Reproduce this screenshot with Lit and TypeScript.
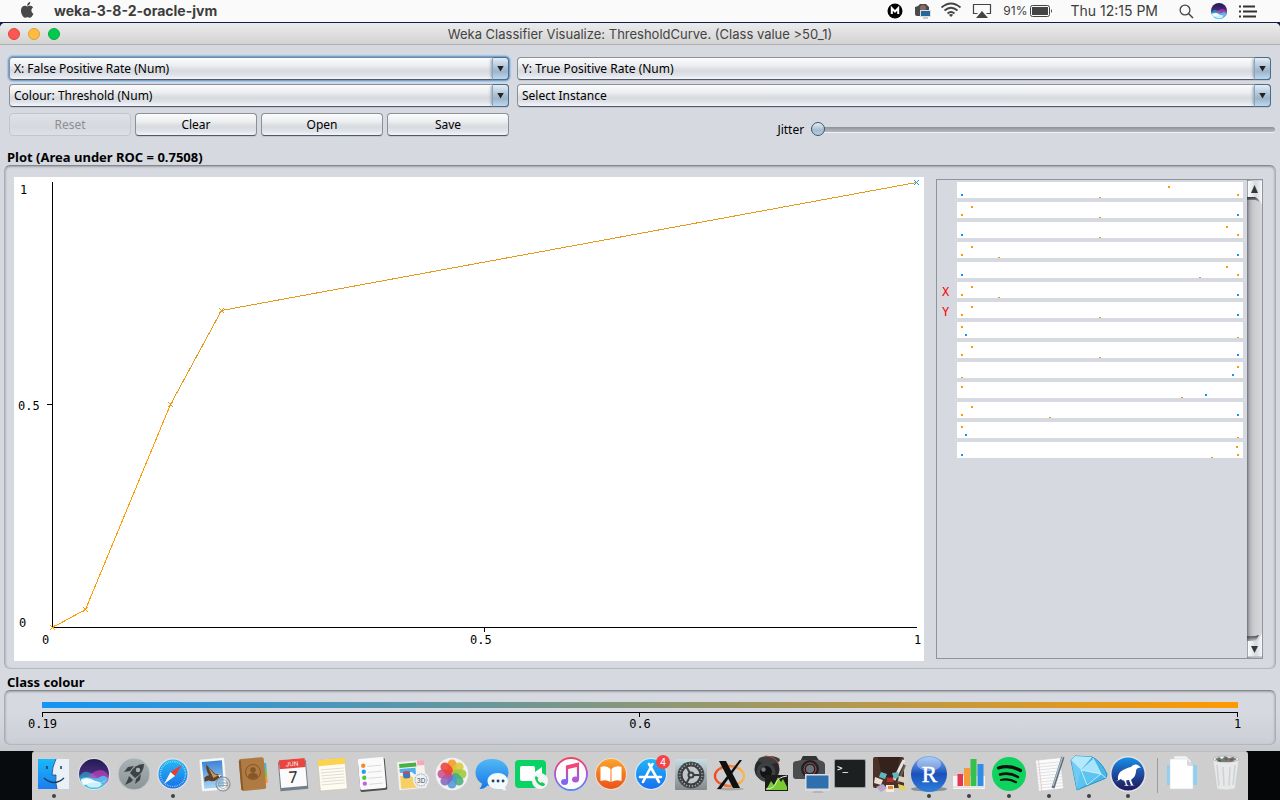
import { LitElement, html, svg, css, TemplateResult, SVGTemplateResult } from "lit";
import { customElement, property, state } from "lit/decorators.js";

type Dot = [x: number, y: number, kind: "o" | "b" | "d"];

const BLUE = "#1f97ea";
const ORANGE = "#ff9a00";
const AMBER = "#e69a1c";

/** One strip per attribute: marks given on a 286 x 16 raster. */
const STRIPS: { axis?: string; dots: Dot[] }[] = [
  { dots: [[4, 12, "b"], [211, 4, "o"], [280, 12, "o"], [142, 15, "d"]] },
  { dots: [[4, 12, "o"], [14, 4, "o"], [280, 12, "b"], [142, 15, "d"]] },
  { dots: [[4, 12, "b"], [269, 4, "o"], [280, 12, "o"], [142, 15, "d"]] },
  { dots: [[4, 12, "o"], [14, 4, "o"], [280, 12, "b"], [41, 15, "d"]] },
  { dots: [[4, 12, "b"], [269, 4, "o"], [280, 12, "o"], [242, 15, "d"]] },
  { axis: "X", dots: [[4, 12, "o"], [14, 4, "o"], [280, 12, "b"], [41, 15, "d"]] },
  { axis: "Y", dots: [[4, 12, "o"], [14, 4, "o"], [280, 12, "b"], [142, 15, "d"]] },
  { dots: [[4, 4, "o"], [8, 12, "b"], [280, 15, "d"]] },
  { dots: [[4, 12, "o"], [14, 4, "o"], [280, 12, "b"], [142, 15, "d"]] },
  { dots: [[280, 4, "o"], [275, 12, "b"], [4, 15, "d"]] },
  { dots: [[4, 4, "o"], [248, 12, "b"], [224, 15, "d"]] },
  { dots: [[4, 12, "o"], [14, 4, "o"], [280, 12, "b"], [92, 15, "d"]] },
  { dots: [[4, 4, "o"], [8, 12, "b"], [280, 15, "d"]] },
  { dots: [[4, 12, "b"], [279, 4, "o"], [280, 12, "o"], [254, 15, "d"]] },
];

/** ROC points as (false positive rate, true positive rate, colour). */
const ROC: [number, number, string][] = [
  [0, 0, ORANGE],
  [0.0385, 0.0404, ORANGE],
  [0.137, 0.501, AMBER],
  [0.196, 0.711, AMBER],
  [1, 1, BLUE],
];

@customElement("roc-plot")
export class RocPlot extends LitElement {
  static styles = css`
    :host { display: block; background: #fff; min-width: 0; min-height: 0; overflow: hidden; }
    .plot { display: block; width: 100%; height: 100%; font: 12px "DejaVu Sans Mono", monospace; }
    .axis { stroke: #000; shape-rendering: crispEdges; }
    .seg { shape-rendering: crispEdges; }
  `;
  @state() private w = 910;
  @state() private h = 484;
  private observer?: ResizeObserver;

  connectedCallback() {
    super.connectedCallback();
    this.observer = new ResizeObserver(([entry]) => {
      this.w = Math.round(entry.contentRect.width);
      this.h = Math.round(entry.contentRect.height);
    });
    this.observer.observe(this);
  }

  disconnectedCallback() {
    this.observer?.disconnect();
    super.disconnectedCallback();
  }

  render() {
    const left = 38, top = 5, right = this.w - 8, bottom = this.h - 34;
    const px = (v: number) => Math.round(left + v * (right - left)) + 0.5;
    const py = (v: number) => Math.floor(bottom - v * (bottom - top)) + 0.5;
    const midX = px(0.5), midY = py(0.5);
    return html`<svg class="plot" role="img" aria-label="ROC curve">
      <path class="axis" fill="none" d="M${left + 0.5} ${top}V${bottom + 0.5}H${right + 1}M${left - 5} ${midY}H${left}M${midX} ${bottom}V${bottom + 5}" />
      <text x="6" y="${top + 12}">1</text>
      <text x="4" y="${midY + 5.5}">0.5</text>
      <text x="5" y="${bottom}">0</text>
      <text x="28" y="${bottom + 17}">0</text>
      <text x="${midX - 14.5}" y="${bottom + 17}">0.5</text>
      <text x="${right - 2}" y="${bottom + 17}">1</text>
      ${ROC.slice(1).map(([x, y], i) => svg`<line class="seg" stroke=${i < 2 ? ORANGE : AMBER}
        x1=${px(ROC[i][0])} y1=${py(ROC[i][1])} x2=${px(x)} y2=${py(y)} />`)}
      ${ROC.map(([x, y, c]) => svg`<path class="seg" fill="none" stroke=${c}
        d="M${px(x) - 2.5} ${py(y) - 2.5}l5 5M${px(x) + 2.5} ${py(y) - 2.5}l-5 5" />`)}
    </svg>`;
  }
}

@customElement("attribute-strips")
export class AttributeStrips extends LitElement {
  static styles = css`
    :host { display: grid; grid-template-columns: 1fr 15px; border: 1px solid #8f939e; min-width: 0; min-height: 0; box-sizing: border-box; }
    .rows { display: flex; flex-direction: column; gap: 4px; margin: 0; padding: 2px 4px 0 0; list-style: none; min-height: 0; overflow: hidden; }
    .row { display: grid; grid-template-columns: 20px 1fr; height: 16px; flex: none; }
    .axis { color: #f00; font: 12px/20px "DejaVu Sans Mono", monospace; padding-left: 5px; }
    .strip { display: block; width: 100%; height: 16px; background: #fff; shape-rendering: crispEdges; }
    .bar { display: flex; flex-direction: column; min-height: 0; background: linear-gradient(90deg, #6d7078 0, #a5a7ad 2px, #c3c4c9 5px, #cdced2 8px, #d6d7db 100%); }
    .end { display: block; border: 0; padding: 0; background: none; height: 26px; width: 15px; flex: none; }
    .track { flex: 1; }
    .end svg { display: block; }
  `;
  render() {
    const fill = { o: ORANGE, b: "#1795ee", d: "#dd9a25" };
    return html`
      <ul class="rows">
        ${STRIPS.map((s) => html`<li class="row">
          <span class="axis">${s.axis ?? ""}</span>
          <svg class="strip" viewBox="0 0 286 16" preserveAspectRatio="none" aria-hidden="true">
            ${s.dots.map(([x, y, k]) => svg`<rect x=${x} y=${y} width="2" height=${k === "d" ? 1 : 2} fill=${fill[k]} />`)}
          </svg></li>`)}
      </ul>
      <div class="bar">
        <button class="end" aria-label="Scroll up">
          <svg width="15" height="26">
            <defs><linearGradient id="g"><stop offset="0" stop-color="#fff" /><stop offset=".6" stop-color="#d6d9de" /><stop offset="1" stop-color="#f6f8fa" /></linearGradient>
            <linearGradient id="s" x2="0" y2="1"><stop offset="0" stop-color="#33363b" /><stop offset="1" stop-color="#33363b" stop-opacity="0" /></linearGradient></defs>
            <path d="M0 17h8q4 2 5 6-3-3-5-3H0z" fill="url(#s)" />
            <path d="M0 1h15v24q-3-7-6-8H0z" fill="url(#g)" /><path d="M.5 1v16" stroke="#a2a5ac" />
            <path d="M7.500 5l3.500 8h-7z" fill="#34373b" />
          </svg>
        </button>
        <div class="track"></div>
        <button class="end" aria-label="Scroll down">
          <svg width="15" height="26">
            <defs><linearGradient id="g"><stop offset="0" stop-color="#fff" /><stop offset=".6" stop-color="#d6d9de" /><stop offset="1" stop-color="#f6f8fa" /></linearGradient>
            <linearGradient id="s" x2="0" y2="1"><stop offset="0" stop-color="#33363b" stop-opacity="0" /><stop offset="1" stop-color="#33363b" /></linearGradient></defs>
            <path d="M0 4q7 1 12-1-2 4-4 6H0z" fill="url(#s)" />
            <path d="M0 25h15V1q-3 7-6 8H0z" fill="url(#g)" /><path d="M.5 9v16H15" fill="none" stroke="#a2a5ac" />
            <path d="M7.500 21l3.500-7h-7z" fill="#34373b" />
          </svg>
        </button>
      </div>`;
  }
}

const siri = (cx: number, cy: number, r: number) => svg`
  <circle cx=${cx} cy=${cy} r=${r} fill="url(#siri)" />
  <g transform="translate(${cx} ${cy}) scale(${r / 16})">
    <path d="M-15.500 3Q-12-4-6-2T3 4-1 12-13 9z" fill="#1fc4d8" opacity=".55" />
    <path d="M-6 2Q2-5 8-4T15.500 3 11 11-1 10z" fill="#d845c4" opacity=".6" />
    <path d="M-15 5Q-9 2-3 4T7 3t8 2Q11 16 0 16T-15 5z" fill="#49cdf5" opacity=".8" />
    <path d="M-14 6Q-7 2 0 7T14 6Q8 10 2 9T-8 11-14 6z" fill="#fff" opacity=".95" />
    <ellipse cx="0" cy="11" rx="8" ry="3.500" fill="#eefcff" opacity=".8" />
  </g>`;

interface App { name: string; open?: boolean; art: SVGTemplateResult }

const gear = Array.from({ length: 24 }, (_, i) => svg`<path d="M20 11v3" stroke="#3b3f42" stroke-width="1.600" transform="rotate(${i * 15} 20 24)" />`);

const APPS: App[] = [
  { name: "Finder", open: true, art: svg`
    <path d="M4 8h31v30H4z" fill="#eaf0f7" /><path d="M4 8h18q-4 8-4 16h4q-1 7 1 14H4z" fill="url(#finder)" />
    <path d="M22 8q-4 8-4 16h4q-1 7 1 14" fill="none" stroke="#21456d" stroke-width=".8" />
    <path d="M13 15v3M27 15v3" stroke="#163a5c" stroke-width="1.500" /><path d="M10 27q10 9 20 0" fill="none" stroke="#163a5c" stroke-width="1.300" />` },
  { name: "Siri", art: svg`<circle cx="20" cy="23" r="16" fill="#dfe3e8" />${siri(20, 23, 15)}` },
  { name: "Launchpad", art: svg`
    <circle cx="20" cy="23" r="16" fill="url(#launch)" stroke="#c6cdcf" />
    <path d="M30 13q-9 0-14 9l5 5q9-5 9-14z" fill="#3c4347" /><path d="M16 20l-6 1 4-5 6-1zM22 28l-1 5 5-4 1-6z" fill="#3c4347" /><path d="M15 25l4 4-2 2-6 3 3-6z" fill="#3c4347" />
    <circle cx="24" cy="19" r="2.200" fill="#a9b2b5" />` },
  { name: "Safari", open: true, art: svg`
    <circle cx="20" cy="23" r="16" fill="#dadfe5" /><circle cx="20" cy="23" r="14.500" fill="url(#safari)" />
    <circle cx="20" cy="23" r="12.500" fill="none" stroke="#b9e7fb" stroke-width="1.500" stroke-dasharray=".6 1.200" />
    <path d="M29 14L17.500 21l4.500 4z" fill="#f0392f" /><path d="M11 33l6.500-12 4.500 4z" fill="#f4f4f4" />` },
  { name: "Mail", art: svg`
    <g transform="rotate(-5 20 23)"><path d="M8 8h24v31H8z" fill="#f6f8fa" stroke="#f6f8fa" stroke-dasharray="1.500 1" /><path d="M10 10h20v27H10z" fill="url(#mail)" />
    <path d="M11 26q2-2 5-2-3-5-2-11l4 5 4 5 4 1 3 3-4 1-4 2-3 0-3-1-4 1z" fill="#5d4029" /><path d="M16 16l5 7 4 2-5 2z" fill="#c79a63" /><path d="M25 24l3 1-2 2z" fill="#f1ead8" /></g>
    <circle cx="30" cy="33" r="7" fill="none" stroke="#8d9297" stroke-width="1.200" /><circle cx="30" cy="33" r="4.500" fill="none" stroke="#9a9fa3" stroke-width=".7" /><path d="M25 32h10M25 34.500h10" stroke="#8d9297" stroke-width=".8" />` },
  { name: "Contacts", art: svg`
    <g transform="rotate(-5 20 23)"><path d="M31 13h3v7h-3z" fill="#42b9c9" /><path d="M31 20h3v7h-3z" fill="#7dc242" /><path d="M31 27h3v6h-3z" fill="#f5983a" />
    <rect x="7" y="7" width="25" height="32" rx="2" fill="#b07a43" /><path d="M7 9v29h2V8z" fill="#8a5a2b" /></g>
    <circle cx="20" cy="21" r="7.500" fill="none" stroke="#855628" /><circle cx="20" cy="19" r="2.800" fill="#855628" /><path d="M15 26q0-4 5-4t5 4q-5 4-10 0z" fill="#855628" />` },
  { name: "Calendar", art: svg`
    <g transform="rotate(-5 20 23)"><path d="M6 10h28v29H6z" fill="#737f8a" /><path d="M7 8h26v28H7z" fill="#fbfbfb" /><path d="M7 8h26v9H7z" fill="#e8453f" />
    <text x="20" y="15" text-anchor="middle" font-size="6" fill="#fff">JUN</text><text x="20" y="32" text-anchor="middle" font-size="16" fill="#333">7</text></g>` },
  { name: "Notes", art: svg`
    <g transform="rotate(-5 20 23)"><path d="M7 8h27v31H7z" fill="#fdfcf4" stroke="#c9b98d" stroke-width=".5" /><path d="M7 8h27v6H7z" fill="#fbd34d" />
    <path d="M9 18h23M9 21h23M9 24h23M9 27h23M9 30h23M9 33h23" stroke="#d9d6c9" stroke-width=".8" /></g>` },
  { name: "Reminders", art: svg`
    <g transform="rotate(-5 20 23)"><rect x="7" y="8" width="27" height="32" rx="1.500" fill="#4d5053" /><rect x="7" y="7" width="26" height="31" rx="1.500" fill="#fafafa" />
    <circle cx="12" cy="14" r="2.200" fill="#f98a2c" /><circle cx="12" cy="20" r="2.200" fill="#2c9bf0" /><circle cx="12" cy="26" r="2.200" fill="#53c63c" /><circle cx="12" cy="32" r="2.200" fill="#bf67dc" />
    <path d="M16 15h14M16 21h14M16 27h14M16 33h14" stroke="#d5d5d5" stroke-width=".8" /></g>` },
  { name: "Maps", art: svg`
    <g transform="rotate(-5 20 23)"><path d="M6 10h27v28H6z" fill="#f5f2ea" /><path d="M8 12h17v4H8z" fill="#47b04a" /><path d="M26 10h7v5h-7z" fill="#f5a7bd" />
    <path d="M8 17h16v6l8 7v3L20 21H8z" fill="#4fb1ec" /><path d="M8 24h10l9 9v4H8z" fill="#f8cf63" /><rect x="11" y="20" width="7" height="7" rx="2" fill="#3f76c4" /><path d="M11 20h7v2h-7z" fill="#d8474d" /></g>
    <circle cx="29" cy="29" r="8" fill="#eef1f3" /><circle cx="29" cy="29" r="6" fill="none" stroke="#647f9b" stroke-width=".7" stroke-dasharray="1.500 1" /><text x="29" y="31.500" text-anchor="middle" font-size="6.500" fill="#4a4f55">3D</text>` },
  { name: "Photos", art: svg`
    <circle cx="20" cy="23" r="16.300" fill="#f2f2f2" />
    ${["#f7941e", "#d9c832", "#9cc83c", "#3fae78", "#4f96d8", "#8064bb", "#c64e92", "#ee3f34"].map((c, i) =>
      svg`<rect x="15.500" y="8.500" width="9" height="14" rx="4.500" fill=${c} opacity=".85" transform="rotate(${i * 45} 20 23)" />`)}` },
  { name: "Messages", art: svg`
    <path d="M20 8C10 8 3.500 14 3.500 21.500c0 5 3 9 6.500 11q0 3-2.500 5.500 5 0 8-3.500C28 36 36.500 30 36.500 21.500S29 8 20 8z" fill="url(#msg)" />
    <path d="M26 22c-6 0-10.500 3.500-10.500 8S20 38 26 38l4 0q2 2 4.500 1-1.500-1-1.500-3c6-5 2-14-7-14z" fill="#f2fafd" /><path d="M21 30h.1M26 30h.1M31 30h.1" stroke="#27456c" stroke-width="2.800" stroke-linecap="round" />` },
  { name: "FaceTime", art: svg`
    <rect x="4" y="9" width="31" height="28" rx="4" fill="#0ad365" /><rect x="9" y="15" width="15" height="15" rx="2" fill="#fff" /><path d="M24 21l7-5v13l-7-4z" fill="#fff" />
    <circle cx="29" cy="30" r="8" fill="#f3f7f4" /><path d="M25 25q-2 1 0 5t6 5q3 0 3-2l-3-2-1.500 1q-3-2-3-4l1-1z" fill="#19c75d" />` },
  { name: "iTunes", art: svg`
    <circle cx="20" cy="23" r="16" fill="#fcfcfd" stroke="url(#tunes)" stroke-width="1.800" />
    <path d="M16 31V16l11-3v15" fill="none" stroke="url(#note)" stroke-width="2.200" /><path d="M15 14.500l13-3v4l-13 3z" fill="#f0467c" />
    <ellipse cx="13.500" cy="31" rx="3.500" ry="3" fill="#8167ee" /><ellipse cx="24.500" cy="28.500" rx="3.500" ry="3" fill="#b357d9" />` },
  { name: "iBooks", art: svg`
    <circle cx="20" cy="23" r="16" fill="#f3dcc9" /><circle cx="20" cy="23" r="15" fill="url(#books)" />
    <path d="M19.500 18q-4-4-10-2v14q6-2 10 1zM20.500 18q4-4 10-2v14q-6-2-10 1z" fill="#fff" />` },
  { name: "App Store", art: svg`
    <circle cx="20" cy="23" r="16" fill="#dcebf5" /><circle cx="20" cy="23" r="15" fill="url(#store)" />
    <path d="M21.500 13L12 31M18 13l10 18M9 26h21" stroke="#fff" stroke-width="2.600" stroke-linecap="round" />
    <circle cx="32" cy="11" r="7" fill="#f4444a" /><text x="32" y="14.500" text-anchor="middle" font-size="10" fill="#fff">4</text>` },
  { name: "System Preferences", art: svg`
    <rect x="4" y="8" width="32" height="31" rx="1" fill="url(#prefs)" /><circle cx="20" cy="24" r="13.500" fill="#555a5d" /><circle cx="20" cy="24" r="11.500" fill="#c2c6c8" />${gear}
    <circle cx="20" cy="24" r="9.500" fill="none" stroke="#3b3f42" stroke-width="2.200" /><circle cx="20" cy="24" r="3.500" fill="#3b3f42" />
    <path d="M20 24h9M20 24l-4.500-8M20 24l-4.500 8" stroke="#3b3f42" stroke-width="2" /><circle cx="20" cy="24" r="1.500" fill="#c2c6c8" />` },
  { name: "XQuartz", art: svg`
    <ellipse cx="20" cy="38" rx="14" ry="1.500" fill="#a9a9a9" /><ellipse cx="19.500" cy="25" rx="14.500" ry="10" fill="none" stroke="url(#ring)" stroke-width="2.400" />
    <path d="M9 10h7l14 27h-7z" fill="#101010" /><path d="M32 9h-2.500L7 38h4z" fill="#101010" />` },
  { name: "Image Capture Pro", art: svg`
    <circle cx="17" cy="18" r="12.500" fill="#27282a" /><ellipse cx="19" cy="9" rx="11" ry="4" fill="#3d3e40" /><path d="M15 5q11 0 14 9" fill="none" stroke="#b04b3d" />
    <circle cx="16" cy="21" r="9.500" fill="#3e4043" /><circle cx="16" cy="21" r="6" fill="#131415" /><circle cx="13.500" cy="18.500" r="2.200" fill="#77797c" />
    <path d="M15 24h23v16H15z" fill="#1b1d1a" /><path d="M16 39l5-9 3 4 4-8 3 5 2-3 4 8v3z" fill="#7acb32" /><path d="M16 38q8 0 10-6t11-7" fill="none" stroke="#e8e8e8" />` },
  { name: "Image Capture", art: svg`
    <path d="M3 13q0-3 4-3l4-1 2-4h13l3 4 3 1q3 1 3 4v12q0 2-3 2H6q-3 0-3-3z" fill="#4a4c4f" /><path d="M13 5h13l2 4H11z" fill="#333" />
    <circle cx="20" cy="18" r="9" fill="#212224" /><circle cx="20" cy="18" r="6" fill="none" stroke="#b04b3d" /><circle cx="20" cy="18" r="4" fill="#68727d" />
    <path d="M15 23h25v17H15z" fill="#d9dcdf" /><path d="M16.500 24.500h22v13h-22z" fill="#2f6fae" /><path d="M24 40h8l2 2H22z" fill="#b3b6b8" />` },
  { name: "Terminal", art: svg`
    <rect x="4" y="8" width="32" height="29" rx="1.500" fill="#9a9d9f" /><rect x="5" y="9" width="30" height="27" rx="1" fill="#1c2021" />
    <text x="7" y="20" font-size="9" font-weight="700" font-family="DejaVu Sans Mono" fill="#f0f0f0">&gt;_</text>` },
  { name: "Seashore", art: svg`
    <rect x="3" y="6" width="31" height="31" rx="2" fill="#4b3229" /><path d="M8 6h22l-4 20H12z" fill="#35221c" /><path d="M34 9L24 29" stroke="#e5e5e3" stroke-width="3" /><path d="M35 14l-7 18" stroke="#6a6058" stroke-width="2" />
    <path d="M5 26l8 3-2 5-7-2z" fill="#e9ded0" /><path d="M16 34h8v7h-8z" fill="#f3ede1" /><path d="M18 35h5v3h-5z" fill="#f08a2d" /><path d="M29 25l9 2-3 5-7-2z" fill="#d7d2c4" /><path d="M11 21l6 2-2 5-6-2zM22 22l6-1 1 5-5 2z" fill="#5fb8bd" />
    <path d="M6 36l7-3 4 4-6 4z" fill="#b8a8ce" /><path d="M28 33l7 2 1 5-7-2z" fill="#e5d35e" /><path d="M17 27h6l1 4h-7z" fill="#bb2b2b" />` },
  { name: "RStudio", open: true, art: svg`
    <ellipse cx="20" cy="38" rx="18" ry="2.500" fill="#8a9097" /><circle cx="20" cy="23" r="18" fill="url(#rs)" /><ellipse cx="20" cy="13" rx="12" ry="7" fill="#fff" opacity=".35" />
    <text x="20.500" y="31" text-anchor="middle" font-size="23" font-family="Liberation Serif" fill="#fff" stroke="#fff" stroke-width=".5">R</text>` },
  { name: "Numbers", open: true, art: svg`
    <path d="M4 25h32v13H4z" fill="#f5f5f5" /><path d="M4 36h32" stroke="#d2d2d2" /><path d="M8.500 23h5.500v12H8.500z" fill="#e5374f" /><path d="M15 17h6v18h-6z" fill="#f79a3e" /><path d="M21.500 8h6v27h-6z" fill="#34c04a" /><path d="M28.500 13h6v22h-6z" fill="#2f8de4" />` },
  { name: "Spotify", open: true, art: svg`
    <circle cx="20" cy="23" r="17" fill="#0fd35f" /><path d="M9.500 17q11-3.500 22 2.500" fill="none" stroke="#111" stroke-width="3.200" stroke-linecap="round" />
    <path d="M11 23.500q9.500-2.500 18 2.500" fill="none" stroke="#111" stroke-width="2.600" stroke-linecap="round" /><path d="M12 29q8-2 15 2.200" fill="none" stroke="#111" stroke-width="2.200" stroke-linecap="round" />` },
  { name: "TextEdit", open: true, art: svg`
    <g transform="rotate(-6 20 23)"><path d="M8 8h25v31H8z" fill="#fbfbfb" stroke="#c4c4c4" stroke-width=".5" /><path d="M11 8v31" stroke="#f0a5a5" stroke-width=".6" />
    <path d="M8 12h25M8 15h25M8 18h25M8 21h25M8 24h25M8 27h25M8 30h25M8 33h25M8 36h25" stroke="#d3d8dd" stroke-width=".7" /></g>
    <path d="M34 6L24 37" stroke="#5e6d7a" stroke-width="3" /><path d="M33.500 6L24 35" stroke="#b4c1cc" stroke-width="1.200" />` },
  { name: "Sketch Viewer", open: true, art: svg`
    <path d="M2 9l4-4 17 1q9 4 15 17l-1 4-29 12z" fill="#48b8ea" stroke="#2793c9" stroke-linejoin="round" /><path d="M2 9l10 10L8 39z" fill="#6fcbf2" /><path d="M12 19L24 8l8 15z" fill="#a8e4fa" /><path d="M12 19l20 4L8 39z" fill="#5cc4ef" />
    <path d="M2 9l4-4 17 1-11 13z" fill="#b4e8fb" /><path d="M12 19l6 15M32 23L18 34M12 19l20 4 5 4M24 7l8 16" fill="none" stroke="#d9f5ff" stroke-width=".8" />` },
  { name: "Weka", open: true, art: svg`
    <circle cx="20" cy="23" r="18" fill="#dfe3e8" /><circle cx="20" cy="23" r="16.500" fill="url(#weka)" />
    <path d="M7 31l3-2q-1-7 5-10t8-3q1-2 4-2.500 3-.5 4 1.500l2 1.500-3 .5q-2 1-2 3 0 5-4 8l-1 1 2 5 2 .5h-6l2-.5-2-5-3 .5 1 4 2 1.500-5-.5 2-1-2-4q-2 0-3-1.500z" fill="#fff" />` },
];

const EXTRAS: App[] = [
  { name: "Documents", art: svg`
    <path d="M1 14h30v20H1z" fill="#8ed0f3" /><path d="M8 5h12l5 5v25H8z" fill="#f4f4f4" stroke="#cfd4d8" stroke-width=".6" /><path d="M4 8h17l6 7v23H4z" fill="#fff" stroke="#d5d9dc" stroke-width=".6" /><path d="M21 8v6q0 1 6 1z" fill="#d6dadd" />` },
  { name: "Trash", art: svg`
    <path d="M7 9h26l-4 29q-9 2-18 0z" fill="#e6e8e9" stroke="#c6c9cb" stroke-width=".6" /><path d="M11 14l2 21M17 16l1 19M24 16l-1 19M29 14l-2 20" stroke="#cfd2d4" stroke-width="1.500" />
    <ellipse cx="20" cy="8" rx="13" ry="3" fill="#f7f7f7" stroke="#b4b7b9" /><path d="M9 8l4-2 3 2 3-3 4 2 4-1 4 2-5 3H13z" fill="#77797a" /><path d="M12 9l3 1M19 7l2 2" stroke="#3f6a3f" stroke-width="1.500" /><path d="M24 9l3-1" stroke="#a2432f" stroke-width="1.500" />` },
];

const grad = (id: string, a: string, b: string, mid?: string) => svg`<linearGradient id=${id} x2="0" y2="1"><stop offset="0" stop-color=${a} />${mid ? svg`<stop offset=".5" stop-color=${mid} />` : ""}<stop offset="1" stop-color=${b} /></linearGradient>`;

const GRADS = svg`<defs>
  ${grad("siri", "#201b4e", "#2aa5d8", "#4a2c80")}${grad("launch", "#a9b2b4", "#8b9597")}${grad("finder", "#19b9fa", "#1c7df0")}${grad("safari", "#24baf3", "#1a6fe6")}
  ${grad("mail", "#3d83d6", "#a8d5f3")}${grad("msg", "#52b9f7", "#1577e6")}${grad("tunes", "#f4455f", "#5b8df4", "#b052d8")}${grad("note", "#f0467c", "#6f6cf1")}
  ${grad("books", "#fba42d", "#ea5218")}${grad("store", "#1fb6f8", "#1a6ff0")}${grad("prefs", "#c5dde4", "#84888b")}
  <linearGradient id="ring"><stop offset="0" stop-color="#ee4a25" /><stop offset="1" stop-color="#f8b850" /></linearGradient>
  ${grad("rs", "#7fb4f2", "#2d80dc", "#1b50bb")}${grad("weka", "#1690e8", "#201858", "#1f4aa0")}
</defs>`;

const icon = (w: number, body: SVGTemplateResult): TemplateResult => html`<svg class="glyph" width=${w} height="22" aria-hidden="true">${body}</svg>`;

@customElement("app-root")
export class AppRoot extends LitElement {
  @property() caption = "Weka Classifier Visualize: ThresholdCurve. (Class value >50_1)";

  static styles = css`
    :host { display: flex; flex-direction: column; height: 100vh; min-height: 480px; overflow: hidden; background: linear-gradient(#0b1f4a 0, #0b1f4a 40px, #06090c 120px); color: #000; font: 12px/16px "Noto Sans", sans-serif; }
    * { box-sizing: border-box; }
    button, select, input { font: inherit; color: inherit; margin: 0; }

    .menubar { display: flex; align-items: center; justify-content: space-between; height: 22px; flex: none; padding: 0 23px 0 20px; background: #fafafa; color: #3d3d3d; font: 14px/22px Inter, sans-serif; }
    .side { display: flex; align-items: center; gap: 12px; }
    .glyph { display: block; overflow: visible; }
    .appname { font-weight: 700; padding-left: 8px; }
    .power { display: flex; gap: 3px; font-size: 12px; }
    .clock { padding: 0 9px 0 6px; }

    .window { display: flex; flex-direction: column; flex: 1; min-height: 0; margin-top: 1px; border-radius: 5px 5px 0 0; overflow: hidden; background: linear-gradient(to top, #c6c8cd 0, #cfd1d8 14px, #d6d9e0 40px); }
    .titlebar { display: grid; grid-template-columns: 1fr auto 1fr; align-items: center; height: 22px; flex: none; padding: 0 8px; background: linear-gradient(#ececec, #d3d3d3); border-bottom: 1px solid #b0b0b0; }
    .lights { display: flex; gap: 8px; }
    .light { width: 12px; height: 12px; border: 1px solid; border-radius: 50%; padding: 0; }
    .close { background: #fc5753; border-color: #e2453f; }
    .mini { background: #fdbc40; border-color: #dfa032; }
    .zoom { background: #04c950; border-color: #06ad3e; }
    .title { margin: 0; font: 13px/20px Inter, sans-serif; color: #444; }

    .controls { display: grid; grid-template-columns: 500fr 754fr; gap: 4px 8px; padding: 12px 9px 0; flex: none; }
    .combo { position: relative; }
    .combo select { display: block; appearance: none; width: 100%; height: 23px; padding: 1px 20px 0 4px; border: 1px solid #8b8f97; border-bottom-color: #535964; border-radius: 4px; outline: none; background: linear-gradient(#fcfcfd 0, #eceef1 35%, #d7dade 60%, #dfe3e9 80%, #f2f6fc 100%); box-shadow: 0 1px 0 #c3c6ce; }
    .combo.focus select { box-shadow: 0 0 0 1px #73a4d1, 0 0 1px 2px #a9c4df; border-top-color: #6f8aa6; }
    .arrow { position: absolute; inset: 0 0 0 auto; width: 17px; border: 1px solid #4b6d8d; border-left-color: #8ba5bc; border-radius: 0 4px 4px 0; background: linear-gradient(#e3edf5 0, #a9bed2 50%, #9db5cb 65%, #c0d8ee 100%); box-shadow: -3px 0 3px -2px #8fa0b3; pointer-events: none; display: grid; place-items: center; }
    .arrow::after { content: ""; width: 7px; height: 6px; background: #222; clip-path: polygon(0 0, 100% 0, 50% 100%); }
    .buttons { display: grid; grid-template-columns: repeat(4, 1fr); gap: 4px; height: 33px; align-items: start; padding-top: 2px; box-sizing: content-box; }
    .push { height: 23px; padding: 0; border: 1px solid #8b8f97; border-bottom-color: #535964; border-radius: 4px; background: linear-gradient(#fcfcfd 0, #eceef1 35%, #d7dade 60%, #dfe3e9 80%, #f2f6fc 100%); box-shadow: 0 1px 0 #c3c6ce; }
    .push:disabled { color: #8e8f91; border-color: #c3c6cc; background: linear-gradient(#dfe2e7, #d5d8de 60%, #dde0e6); box-shadow: none; }
    .jitter { display: flex; align-items: center; gap: 7px; justify-self: end; width: 66%; height: 35px; padding-top: 2px; margin-right: -4px; }
    .jitter input { flex: 1; min-width: 0; appearance: none; height: 15px; background: none; }
    .jitter input::-webkit-slider-runnable-track { height: 5px; border-radius: 3px; background: linear-gradient(#8f929b, #b6b9c2); box-shadow: 0 1px 0 #eff1f5; }
    .jitter input::-webkit-slider-thumb { appearance: none; width: 14px; height: 14px; margin-top: -5px; border: 1px solid #40566d; border-radius: 50%; background: linear-gradient(#e4edf4, #a5bbd0 60%, #b5cde4); }

    .heading { margin: 0; padding: 4px 0 1px 7px; font-size: 13px; line-height: 14px; font-weight: 700; flex: none; }
    .class-heading { padding-top: 6px; }
    .panel { margin: 0 4px; border: 1px solid #a9acb3; border-top-color: #85888f; border-bottom-color: #b4b7bd; border-radius: 6px; box-shadow: inset 0 2px 2px -1px #9fa2a9, inset 2px 0 2px -1px #b7bac1, inset -2px 0 2px -1px #b7bac1; }
    .plot-panel { display: grid; grid-template-columns: 910fr 327fr; grid-template-rows: minmax(0, 1fr); gap: 12px; flex: 1; min-height: 0; padding: 11px 12px 7px 9px; }
    .strips { margin: 2px 0; }
    .class-panel { flex: none; margin-bottom: 6px; padding: 11px 37px 13px; font: 12px/14px "DejaVu Sans Mono", monospace; }
    .ramp { height: 6px; background: linear-gradient(90deg, #1295f4, #ff9a00); }
    .scale { display: grid; grid-template-columns: 1fr 1fr; height: 5px; margin-top: 4px; border: solid #000; border-width: 1px 1px 0; }
    .half { border-right: 1px solid #000; }
    .values { display: flex; justify-content: space-between; }
    .value { display: flex; justify-content: center; width: 1px; }

    .desk { flex: none; background: linear-gradient(90deg, #070b0d, #040607); }
    .dock { display: flex; height: 49px; margin: 0 32px; padding: 0 2px; border-radius: 4px 4px 0 0; background: #cecece; box-shadow: inset 0 1px 0 #bdbdbd; font-family: Inter, sans-serif; }
    .app { flex: 1; min-width: 0; display: flex; justify-content: center; border: 0; padding: 0; background: none; }
    .app svg { flex: none; width: 40px; height: 49px; overflow: visible; }
    .divider { width: 1px; margin: 7px 8px 7px 9px; background: #9c9c9c; }
    .defs { position: absolute; width: 0; height: 0; }
  `;

  private combo(label: string, text: string, focus = false) {
    return html`<div class="combo ${focus ? "focus" : ""}"><select aria-label=${label}><option>${text}</option></select><span class="arrow"></span></div>`;
  }

  private dockItem = (a: App) => html`<button class="app" aria-label=${a.name}>
    <svg viewBox="0 0 40 49">${a.art}${a.open ? svg`<circle cx="20" cy="45" r="2" fill="#424242" />` : ""}</svg>
  </button>`;

  render() {
    return html`
      <svg class="defs" aria-hidden="true">${GRADS}</svg>
      <header class="menubar">
        <div class="side">
          ${icon(14, svg`<path transform="translate(-.5 2) scale(.64 .66)" fill="#484848" d="M12.152 6.896c-.948 0-2.415-1.078-3.960-1.040-2.040.027-3.910 1.183-4.961 3.014-2.117 3.675-.546 9.103 1.519 12.090 1.013 1.454 2.208 3.090 3.792 3.039 1.520-.065 2.090-.987 3.935-.987 1.831 0 2.350.987 3.960.948 1.637-.026 2.676-1.480 3.676-2.948 1.156-1.688 1.636-3.325 1.662-3.415-.039-.013-3.182-1.221-3.220-4.857-.026-3.040 2.480-4.494 2.597-4.559-1.429-2.090-3.623-2.324-4.390-2.376-2-.156-3.675 1.090-4.610 1.090zM15.530 3.830c.843-1.012 1.400-2.427 1.245-3.830-1.207.052-2.662.805-3.532 1.818-.780.896-1.454 2.338-1.273 3.714 1.338.104 2.715-.688 3.559-1.701" />`)}
          <span class="appname">weka-3-8-2-oracle-jvm</span>
        </div>
        <div class="side">
          ${icon(16, svg`<circle cx="8" cy="11" r="7.500" fill="#000" /><path d="M4.800 14V8.200L8 11.500l3.200-3.300V14" fill="none" stroke="#fff" stroke-width="2" />`)}
          ${icon(15, svg`<path d="M0 7l3-1 2-2h6l2 2 1 1v9H2q-2 0-2-2z" fill="#4a4a4a" /><circle cx="8" cy="8" r="3" fill="#8d6a60" /><path d="M5 10h11v7H5z" fill="#ddd" /><path d="M6 11h9v5H6z" fill="#27659f" /><path d="M8 18h5" stroke="#999" />`)}
          ${icon(19, svg`<g fill="none" stroke="#444" stroke-width="1.800"><path d="M-.5 7.500q9.500-8 19 0M2.500 10.500q6.500-5.500 13 0M5.500 13.500q3.500-3 7 0" /></g><path d="M6.800 14.800q2.200-1.500 4.400 0L9 17z" fill="#444" />`)}
          ${icon(18, svg`<path d="M4.500 13.500h-4v-9h17v9h-4" fill="none" stroke="#444" stroke-width="1.200" /><path d="M9 11l6 7H3z" fill="#444" />`)}
          <span class="power">91% ${icon(22, svg`<rect x=".5" y="5.500" width="19" height="11" rx="2" fill="none" stroke="#444" /><rect x="2" y="7" width="16" height="8" fill="#444" /><path d="M21 9q2 2 0 4z" fill="#444" />`)}</span>
          <span class="clock">Thu 12:15 PM</span>
          ${icon(16, svg`<circle cx="6" cy="10" r="4.900" fill="none" stroke="#444" stroke-width="1.300" /><path d="M9.500 13.500l4.500 4.500" stroke="#444" stroke-width="1.500" />`)}
          ${icon(20, svg`${siri(12, 11, 8)}`)}
          ${icon(18, svg`<path d="M0 6.500h2M0 11.500h2M0 16.500h2M4 6.500h12M4 11.500h14M4 16.500h13" stroke="#333" stroke-width="1.800" />`)}
        </div>
      </header>
      <main class="window">
        <div class="titlebar">
          <div class="lights">
            <button class="light close" aria-label="Close"></button>
            <button class="light mini" aria-label="Minimize"></button>
            <button class="light zoom" aria-label="Zoom"></button>
          </div>
          <h1 class="title">${this.caption}</h1>
        </div>
        <div class="controls">
          ${this.combo("X", "X: False Positive Rate (Num)", true)}
          ${this.combo("Y", "Y: True Positive Rate (Num)")}
          ${this.combo("Colour", "Colour: Threshold (Num)")}
          ${this.combo("Instance", "Select Instance")}
          <div class="buttons">
            <button class="push" disabled>Reset</button>
            <button class="push">Clear</button>
            <button class="push">Open</button>
            <button class="push">Save</button>
          </div>
          <div class="jitter">
            <label for="jitter">Jitter</label>
            <input id="jitter" type="range" min="0" max="50" value="0" />
          </div>
        </div>
        <h2 class="heading">Plot (Area under ROC = 0.7508)</h2>
        <section class="panel plot-panel">
          <roc-plot></roc-plot>
          <attribute-strips class="strips"></attribute-strips>
        </section>
        <h2 class="heading class-heading">Class colour</h2>
        <section class="panel class-panel">
          <div class="ramp"></div>
          <div class="scale"><span class="half"></span></div>
          <div class="values"><span class="value">0.19</span><span class="value">0.6</span><span class="value">1</span></div>
        </section>
      </main>
      <footer class="desk">
        <nav class="dock" aria-label="Dock">
          ${APPS.map(this.dockItem)}
          <span class="divider"></span>
          ${EXTRAS.map(this.dockItem)}
        </nav>
      </footer>`;
  }
}
